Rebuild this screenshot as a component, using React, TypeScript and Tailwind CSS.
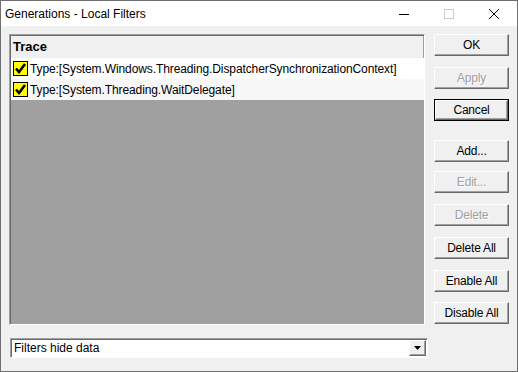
const buttons = [
  { label: 'OK', mt: 'mt-0' },
  { label: 'Apply', mt: 'mt-[11px]', disabled: true },
  { label: 'Cancel', mt: 'mt-[10px]', isDefault: true },
  { label: 'Add...', mt: 'mt-[19px]' },
  { label: 'Edit...', mt: 'mt-[9px]', disabled: true },
  { label: 'Delete', mt: 'mt-[11px]', disabled: true },
  { label: 'Delete All', mt: 'mt-[11px]' },
  { label: 'Enable All', mt: 'mt-[11px]' },
  { label: 'Disable All', mt: 'mt-[10px]' },
];

const rows = [
  'Type:[System.Windows.Threading.DispatcherSynchronizationContext]',
  'Type:[System.Threading.WaitDelegate]',
];

const CheckBox = () => (
  <svg width="15" height="15" viewBox="0 0 15 15" className="shrink-0">
    <rect x="0.5" y="0.5" width="14" height="14" fill="#ffff00" stroke="#000" />
    <path d="M3 7.5 L6 11 L12 3" fill="none" stroke="#000" strokeWidth="2.6" strokeLinejoin="miter" />
  </svg>
);

const WinButton = ({
  label,
  disabled,
  isDefault,
  mt,
}: {
  label: string;
  disabled?: boolean;
  isDefault?: boolean;
  mt: string;
}) => (
  <div className={`${mt} h-[22px] w-[75px] ${isDefault ? 'border border-black' : ''}`}>
    <div
      className={`flex h-full w-full items-center justify-center border border-t-white border-l-white border-r-[#696969] border-b-[#696969] bg-[#f0f0f0] shadow-[inset_-1px_-1px_0_#a0a0a0] text-[12px] tracking-[-0.2px] ${
        disabled ? 'text-[#a0a0a0] [text-shadow:1px_1px_0_#fff]' : 'text-black'
      }`}
    >
      {label}
    </div>
  </div>
);

export default function App() {
  return (
    <div className="flex h-[372px] w-[518px] flex-col border border-[#707070] bg-[#f0f0f0] font-['Liberation_Sans',Arial,sans-serif] text-black">
      {/* title bar */}
      <div className="flex h-[25px] items-center bg-white">
        <span className="pl-[4px] text-[12px]">Generations - Local Filters</span>
        <div className="ml-auto flex h-full items-center">
          <div className="flex h-full w-[45px] items-center justify-center">
            <svg width="10" height="10" viewBox="0 0 10 10">
              <path d="M0 5.5 H10" stroke="#000" strokeWidth="1" />
            </svg>
          </div>
          <div className="flex h-full w-[45px] items-center justify-center">
            <svg width="10" height="10" viewBox="0 0 10 10">
              <rect x="0.5" y="0.5" width="9" height="9" fill="none" stroke="#cccccc" />
            </svg>
          </div>
          <div className="flex h-full w-[46px] items-center justify-center">
            <svg width="10" height="10" viewBox="0 0 10 10">
              <path d="M0 0 L10 10 M10 0 L0 10" stroke="#000" strokeWidth="1" />
            </svg>
          </div>
        </div>
      </div>

      {/* client */}
      <div className="flex flex-col px-[8px] pt-[8px]">
        <div className="flex gap-[9px]">
          <div className="flex h-[291px] w-[419px] flex-col border border-t-[#a0a0a0] border-l-[#a0a0a0] border-r-white border-b-white shadow-[inset_1px_1px_0_#696969]">
            <div className="ml-[1px] mt-[1px] flex h-[22px] items-center border-r border-[#a0a0a0] bg-[#f0f0f0] pl-[2px] text-[13px] font-bold">
              Trace
            </div>
            <div className="ml-[1px] flex h-[21px] items-center gap-[2px] bg-white pl-[2px] text-[12px] tracking-[-0.1px]">
              <CheckBox />
              <span>{rows[0]}</span>
            </div>
            <div className="ml-[1px] flex h-[21px] items-center gap-[2px] bg-[#f7f7f7] pl-[2px] text-[12px] tracking-[-0.1px]">
              <CheckBox />
              <span>{rows[1]}</span>
            </div>
            <div className="ml-[1px] flex-1 bg-[#a0a0a0]" />
          </div>

          <div className="flex flex-col">
            {buttons.map((b) => (
              <WinButton key={b.label} {...b} />
            ))}
          </div>
        </div>

        <div className="ml-[1px] mt-[13px] flex h-[20px] w-[418px] border border-t-[#a0a0a0] border-l-[#a0a0a0] border-r-white border-b-white bg-white shadow-[inset_1px_1px_0_#696969]">
          <div className="flex flex-1 items-center pl-[3px] text-[12px]">Filters hide data</div>
          <div className="my-[1px] mr-[1px] flex w-[17px] items-center justify-center border border-t-white border-l-white border-r-[#696969] border-b-[#696969] bg-[#f0f0f0] shadow-[inset_-1px_-1px_0_#a0a0a0]">
            <svg width="7" height="4" viewBox="0 0 7 4">
              <path d="M0 0 H7 L3.5 4 Z" fill="#000" />
            </svg>
          </div>
        </div>
      </div>
    </div>
  );
}
